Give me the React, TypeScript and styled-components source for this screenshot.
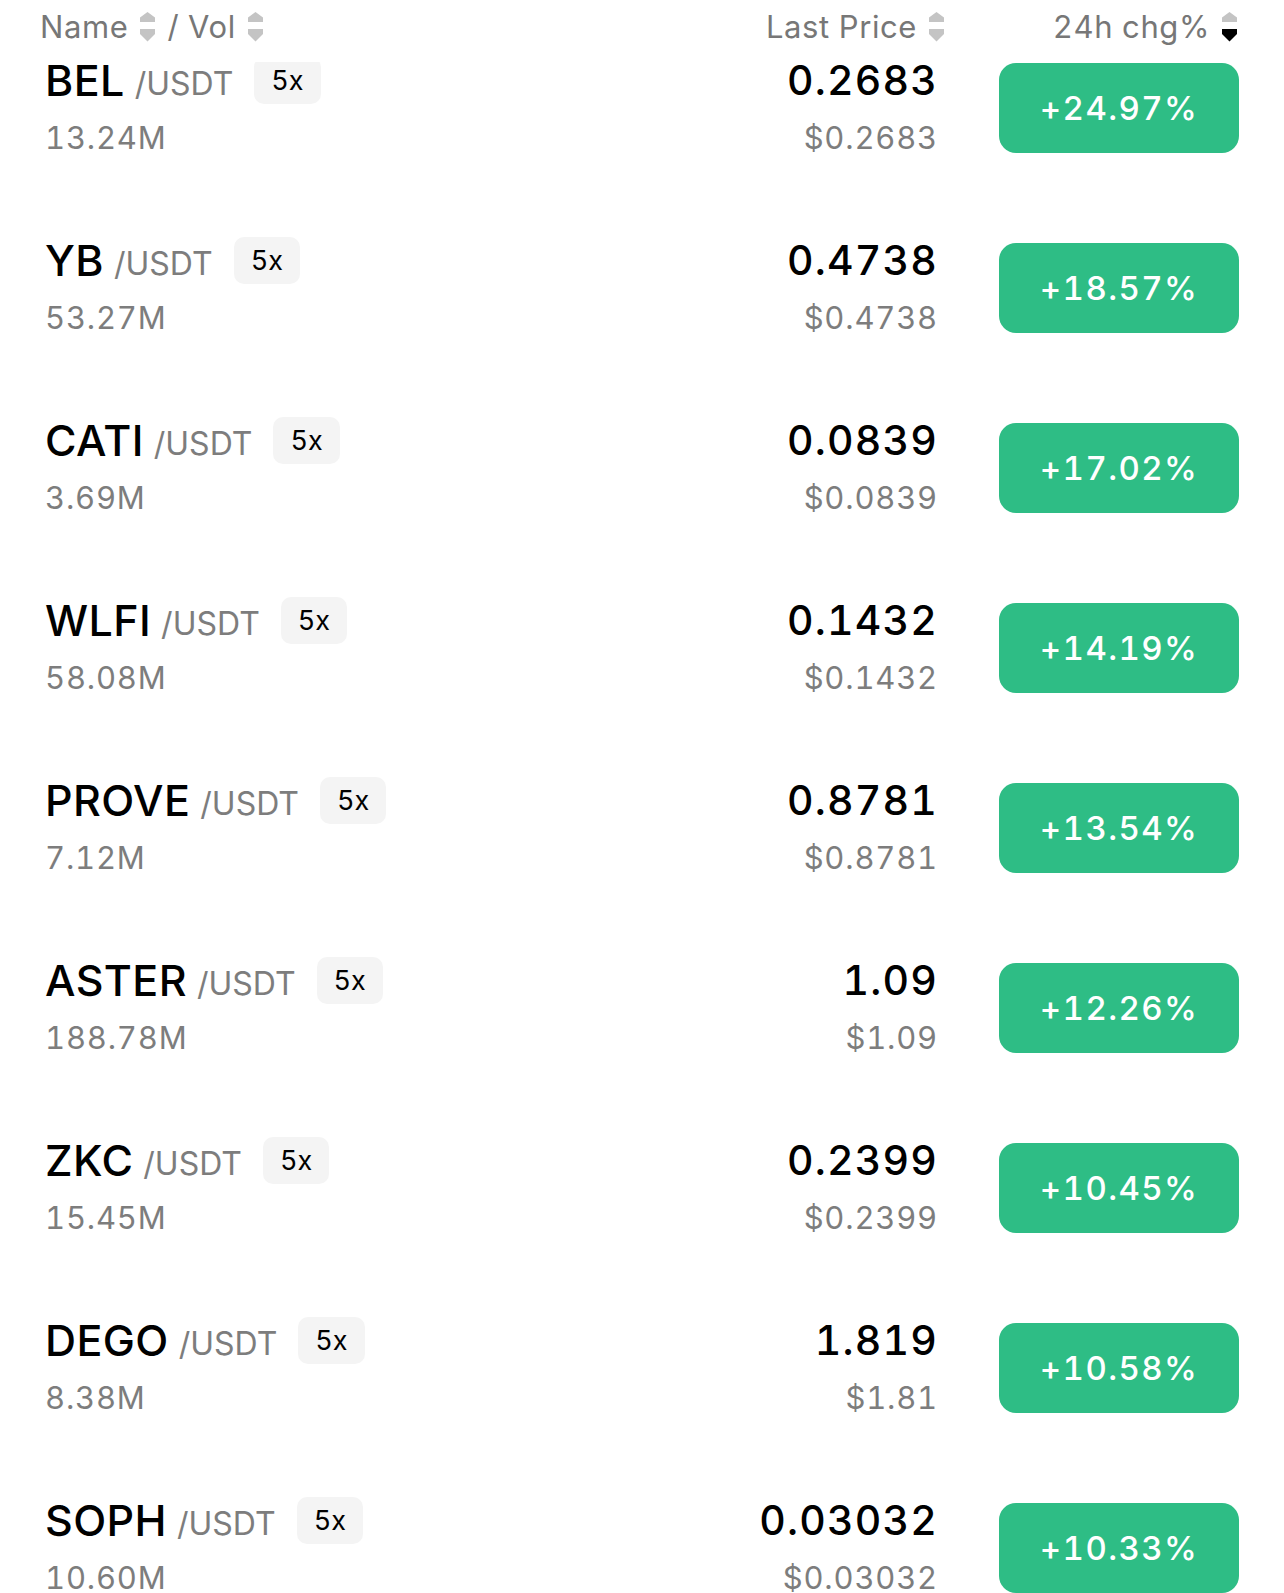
import React from "react";
import styled, { createGlobalStyle } from "styled-components";

const GlobalStyle = createGlobalStyle`
  html, body {
    margin: 0;
    padding: 0;
    background: #ffffff;
    overflow: hidden;
  }
  body {
    font-family: Inter, "Noto Sans", sans-serif;
    font-feature-settings: "tnum" 1;
    -webkit-font-smoothing: antialiased;
  }
  * { box-sizing: border-box; }
`;

const Page = styled.div`
  width: 1284px;
  height: 1593px;
  overflow: hidden;
  background: #ffffff;
`;

const Header = styled.div`
  position: relative;
  z-index: 1;
  height: 62px;
  padding: 0 47px 9px 40px;
  display: flex;
  align-items: center;
  background: #ffffff;
  font-size: 31px;
  color: #777777;
`;

const HeaderGroup = styled.div<{ $grow?: boolean; $width?: number }>`
  display: flex;
  align-items: center;
  justify-content: ${(p) => (p.$grow ? "flex-start" : "flex-end")};
  flex: ${(p) => (p.$grow ? "1" : "none")};
  width: ${(p) => (p.$width ? `${p.$width}px` : "auto")};
  gap: 12px;
`;

const HeaderLabel = styled.span`
  line-height: 40px;
  letter-spacing: 0.6px;
`;

const SortIcon = ({ active }: { active?: "down" | "up" }) => (
  <svg width="15" height="30" viewBox="0 0 15 30" aria-hidden>
    <polygon points="7.5,0 15,5.5 15,10 0,10 0,5.5" fill={active === "up" ? "#000" : "#c4c4c4"} />
    <polygon points="0,17 15,17 15,22 7.5,29.5 0,22" fill={active === "down" ? "#000" : "#c4c4c4"} />
  </svg>
);

const List = styled.div`
  margin-top: -44px;
`;

const Row = styled.div`
  height: 180px;
  display: flex;
  align-items: center;
  padding: 0 45px 0 45px;
`;

const NameCol = styled.div`
  flex: 1;
  display: flex;
  flex-direction: column;
`;

const SymbolLine = styled.div`
  display: flex;
  align-items: center;
  height: 48px;
`;

const Symbol = styled.span`
  font-size: 43px;
  font-weight: 550;
  color: #000000;
  letter-spacing: 0.4px;
`;

const Quote = styled.span`
  font-size: 32px;
  color: #7d7d7d;
  margin-left: 10px;
  margin-top: 6px;
`;

const Leverage = styled.span`
  margin-left: 21px;
  height: 47px;
  padding: 0 17px;
  border-radius: 10px;
  background: #f4f4f4;
  color: #000000;
  font-size: 27px;
  display: flex;
  align-items: center;
`;

const SubLine = styled.div<{ $align?: "right" }>`
  margin-top: 12px;
  height: 44px;
  line-height: 44px;
  font-size: 31px;
  color: #7d7d7d;
  letter-spacing: 0.8px;
  text-align: ${(p) => p.$align ?? "left"};
`;

const PriceCol = styled.div`
  display: flex;
  flex-direction: column;
  align-items: flex-end;
`;

const Price = styled.div`
  height: 48px;
  line-height: 48px;
  font-size: 41px;
  font-weight: 550;
  color: #000000;
  letter-spacing: 1.2px;
`;

const Change = styled.div`
  margin-left: 61px;
  width: 240px;
  height: 90px;
  border-radius: 17px;
  background: #2ebd85;
  color: #ffffff;
  font-size: 33px;
  font-weight: 500;
  letter-spacing: 1.4px;
  display: flex;
  align-items: center;
  justify-content: center;
`;

type Ticker = {
  sym: string;
  vol: string;
  price: string;
  usd: string;
  chg: string;
};

const tickers: Ticker[] = [
  { sym: "BEL", vol: "13.24M", price: "0.2683", usd: "$0.2683", chg: "+24.97%" },
  { sym: "YB", vol: "53.27M", price: "0.4738", usd: "$0.4738", chg: "+18.57%" },
  { sym: "CATI", vol: "3.69M", price: "0.0839", usd: "$0.0839", chg: "+17.02%" },
  { sym: "WLFI", vol: "58.08M", price: "0.1432", usd: "$0.1432", chg: "+14.19%" },
  { sym: "PROVE", vol: "7.12M", price: "0.8781", usd: "$0.8781", chg: "+13.54%" },
  { sym: "ASTER", vol: "188.78M", price: "1.09", usd: "$1.09", chg: "+12.26%" },
  { sym: "ZKC", vol: "15.45M", price: "0.2399", usd: "$0.2399", chg: "+10.45%" },
  { sym: "DEGO", vol: "8.38M", price: "1.819", usd: "$1.81", chg: "+10.58%" },
  { sym: "SOPH", vol: "10.60M", price: "0.03032", usd: "$0.03032", chg: "+10.33%" },
];

export default function App() {
  return (
    <Page>
      <GlobalStyle />
      <Header>
        <HeaderGroup $grow>
          <HeaderLabel>Name</HeaderLabel>
          <SortIcon />
          <HeaderLabel>/ Vol</HeaderLabel>
          <SortIcon />
        </HeaderGroup>
        <HeaderGroup>
          <HeaderLabel>Last Price</HeaderLabel>
          <SortIcon />
        </HeaderGroup>
        <HeaderGroup $width={293}>
          <HeaderLabel>24h chg%</HeaderLabel>
          <SortIcon active="down" />
        </HeaderGroup>
      </Header>
      <List>
        {tickers.map((t) => (
          <Row key={t.sym}>
            <NameCol>
              <SymbolLine>
                <Symbol>{t.sym}</Symbol>
                <Quote>/USDT</Quote>
                <Leverage>5x</Leverage>
              </SymbolLine>
              <SubLine>{t.vol}</SubLine>
            </NameCol>
            <PriceCol>
              <Price>{t.price}</Price>
              <SubLine $align="right">{t.usd}</SubLine>
            </PriceCol>
            <Change>{t.chg}</Change>
          </Row>
        ))}
      </List>
    </Page>
  );
}
